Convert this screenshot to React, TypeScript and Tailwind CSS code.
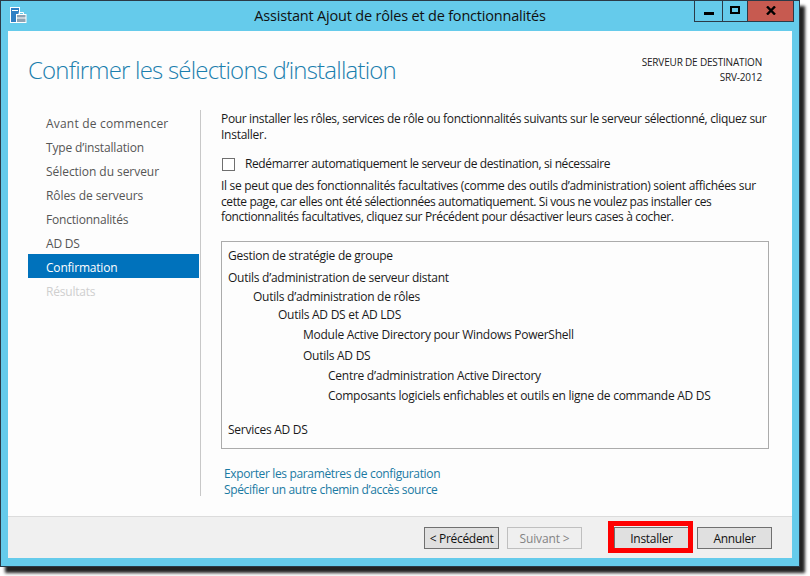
const navItems = [
  { text: "Avant de commencer", cls: "tracking-[0.2px]" },
  { text: "Type d’installation", cls: "tracking-[-0.15px]" },
  { text: "Sélection du serveur", cls: "tracking-[-0.05px]" },
  { text: "Rôles de serveurs", cls: "tracking-[-0.08px]" },
  { text: "Fonctionnalités", cls: "tracking-[-0.2px]" },
  { text: "AD DS", cls: "tracking-[-0.2px]" },
];

const treeRows = [
  { text: "Gestion de stratégie de groupe", pl: "pl-[6px]", mt: "mt-0" },
  { text: "Outils d’administration de serveur distant", pl: "pl-[6px]", mt: "mt-[6px]" },
  { text: "Outils d’administration de rôles", pl: "pl-[31px]", mt: "mt-[3px]" },
  { text: "Outils AD DS et AD LDS", pl: "pl-[56px]", mt: "mt-[2px]" },
  { text: "Module Active Directory pour Windows PowerShell", pl: "pl-[81px]", mt: "mt-[4px]" },
  { text: "Outils AD DS", pl: "pl-[81px]", mt: "mt-[5px]" },
  { text: "Centre d’administration Active Directory", pl: "pl-[106px]", mt: "mt-[4px]" },
  { text: "Composants logiciels enfichables et outils en ligne de commande AD DS", pl: "pl-[106px]", mt: "mt-[4px]" },
  { text: "Services AD DS", pl: "pl-[6px]", mt: "mt-[18px]" },
];

function ServerIcon() {
  return (
    <svg width="17" height="17" viewBox="0 0 17 17" fill="none">
      <rect x="0.5" y="0.5" width="9" height="15" fill="#2f7fc4" stroke="#fff" />
      <rect x="2" y="3" width="6" height="1" fill="#fff" />
      <rect x="6.5" y="7.5" width="9.5" height="8" fill="#8fa3b3" stroke="#fff" />
      <path d="M9 7.5V5.5H13.5V7.5" stroke="#fff" />
      <path d="M7 11H16" stroke="#fff" />
    </svg>
  );
}

function FooterButton({ label, disabled }: { label: string; disabled?: boolean }) {
  return (
    <button
      className={
        disabled
          ? "w-[75px] h-[22px] pt-px border border-[#bfbfbf] bg-[#efefef] text-[#838383] text-[12px] tracking-[-0.15px]"
          : "w-[75px] h-[22px] pt-px border border-[#707070] bg-[#e0e0e0] text-[#111] text-[12px] tracking-[-0.3px]"
      }
    >
      {label}
    </button>
  );
}

export default function App() {
  return (
    <div className="w-[810px] h-[576px] bg-white font-['Open_Sans',sans-serif] text-[12px] text-[#1a1a1a] tracking-[-0.26px]">
      <div className="w-[800px] h-[567px] flex flex-col border border-[#2b3a47] bg-[#65cbeb] px-[7px] pb-[8px] shadow-[5px_6px_3px_#222]">
        <div className="h-[30px] shrink-0 -mx-[7px] grid grid-cols-[1fr_auto_1fr]">
          <div className="pl-[9px] pt-[6px]">
            <ServerIcon />
          </div>
          <h1 className="pt-[5px] text-[14.5px] leading-[20px] font-normal text-[#111] tracking-[-0.19px]">
            Assistant Ajout de rôles et de fonctionnalités
          </h1>
          <div className="flex justify-end pr-[5px]">
            <div className="flex h-[21px] border border-t-0 border-[#2b3a47]">
              <div className="w-[28px] flex items-center justify-center border-r border-[#2b3a47]">
                <div className="w-[10px] h-[3px] bg-black mt-[4px]" />
              </div>
              <div className="w-[25px] flex items-center justify-center border-r border-[#2b3a47]">
                <div className="w-[10px] h-[8px] border-2 border-black -mt-[2px]" />
              </div>
              <div className="w-[45px] flex items-center justify-center bg-[#c75a50]">
                <svg width="10" height="9" viewBox="0 0 10 9" fill="none" className="-mt-[2px]">
                  <path d="M1 0.5L9 8.5M9 0.5L1 8.5" stroke="#000" strokeWidth="2.4" />
                </svg>
              </div>
            </div>
          </div>
        </div>

        <div className="flex-1 flex flex-col bg-[#fdfdfd] min-h-0">
          <div className="flex-1 min-h-0">
            <div className="h-[79px] flex justify-between pl-[20px] pr-[30px]">
              <h2 className="pt-[21px] text-[24px] leading-[36px] font-light text-[#1b7fae] tracking-[-0.8px]">
                Confirmer les sélections d’installation
              </h2>
              <div className="pt-[24px] text-right text-[10px] leading-[15px] text-[#222] tracking-[-0.18px]">
                <div>SERVEUR DE DESTINATION</div>
                <div>SRV-2012</div>
              </div>
            </div>

            <div className="flex h-[386px]">
              <nav className="ml-[20px] w-[173px] border-r border-[#c8c8c8] pr-px text-[#555]">
                {navItems.map((item) => (
                  <div key={item.text} className={`h-[24px] pl-[18px] leading-[28px] ${item.cls}`}>
                    {item.text}
                  </div>
                ))}
                <div className="h-[24px] pl-[18px] leading-[28px] bg-[#0072bc] text-white tracking-[-0.2px]">Confirmation</div>
                <div className="h-[24px] pl-[18px] leading-[28px] text-[#cfcfcf] tracking-[-0.2px]">Résultats</div>
              </nav>

              <div className="ml-[20px] w-[548px] leading-[15.5px] pt-px">
                <p>
                  <span className="tracking-[-0.34px]">
                    Pour installer les rôles, services de rôle ou fonctionnalités suivants sur le serveur sélectionné, cliquez sur
                  </span>
                  <br />
                  Installer.
                </p>
                <label className="mt-[15px] flex items-center h-[14px] pl-px">
                  <span className="w-[13px] h-[13px] border border-[#6f6f6f] bg-white" />
                  <span className="ml-[10px] tracking-[-0.39px]">Redémarrer automatiquement le serveur de destination, si nécessaire</span>
                </label>
                <p className="mt-[7px]">
                  <span className="tracking-[-0.3px]">
                    Il se peut que des fonctionnalités facultatives (comme des outils d’administration) soient affichées sur
                  </span>
                  <br />
                  <span className="tracking-[-0.42px]">
                    cette page, car elles ont été sélectionnées automatiquement. Si vous ne voulez pas installer ces
                  </span>
                  <br />
                  <span className="tracking-[-0.36px]">
                    fonctionnalités facultatives, cliquez sur Précédent pour désactiver leurs cases à cocher.
                  </span>
                </p>
                <div className="mt-[16px] h-[208px] border border-[#ababab] pt-[6px]">
                  {treeRows.map((row) => (
                    <div key={row.text} className={`h-[16px] leading-[16px] ${row.pl} ${row.mt}`}>
                      {row.text}
                    </div>
                  ))}
                </div>
                <div className="mt-[17px] ml-[3px] leading-[16px] text-[#1a7aa3] tracking-[-0.35px]">
                  <div>Exporter les paramètres de configuration</div>
                  <div>Spécifier un autre chemin d’accès source</div>
                </div>
              </div>
            </div>
          </div>

          <div className="h-[42px] shrink-0 flex justify-end gap-[8px] border-t border-[#dcdcdc] bg-[#f0f0f0] pt-[10px] pr-[20px]">
            <FooterButton label="< Précédent" />
            <FooterButton label="Suivant >" disabled />
            <div className="relative ml-[24px]">
              <FooterButton label="Installer" />
              <span className="absolute -left-[6px] -top-[6px] w-[85px] h-[32px] border-[5px] border-l-[6px] border-[#ff0000]" />
            </div>
            <FooterButton label="Annuler" />
          </div>
        </div>
      </div>
    </div>
  );
}
